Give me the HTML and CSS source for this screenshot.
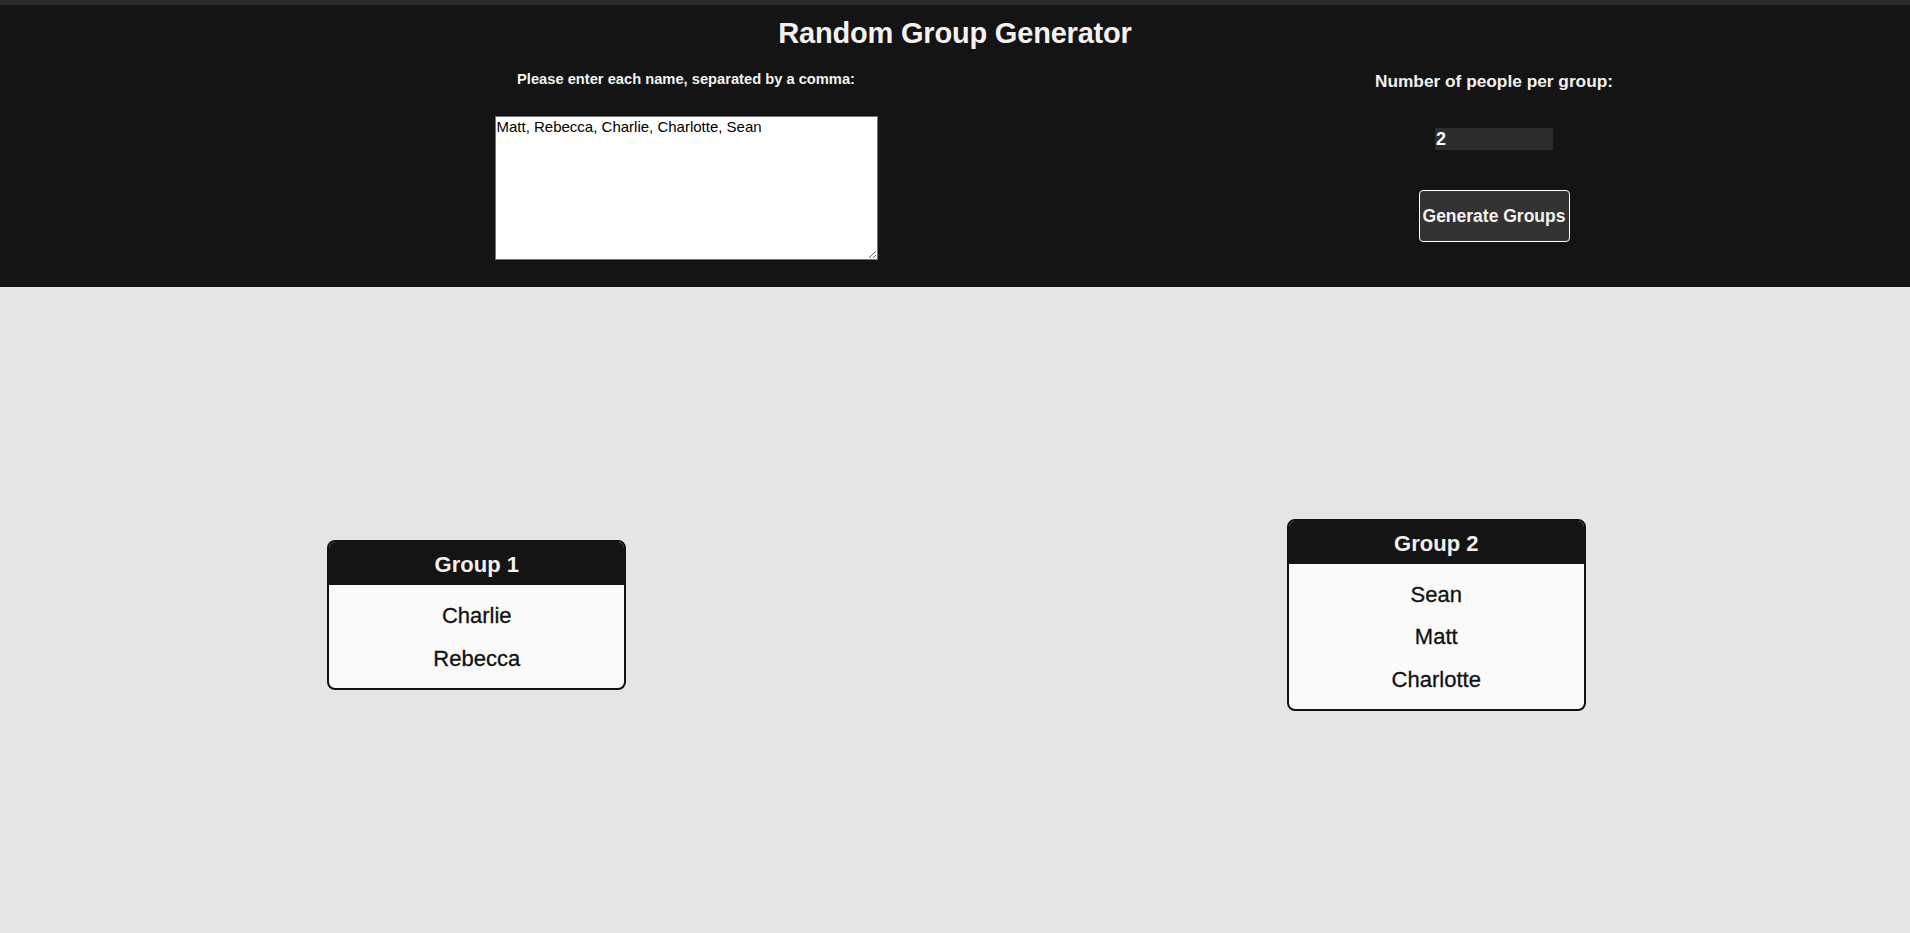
FILE: index.html
```html
<!DOCTYPE html>
<html lang="en">
<head>
<meta charset="utf-8">
<title>Random Group Generator</title>
<link rel="stylesheet" href="styles.css">
</head>
<body>
<header class="top">
  <h1 class="title">Random Group Generator</h1>
  <div class="controls">
    <div class="names-col">
      <p class="label">Please enter each name, separated by a comma:</p>
      <textarea class="names-input">Matt, Rebecca, Charlie, Charlotte, Sean</textarea>
    </div>
    <div class="size-col">
      <p class="label label-lg">Number of people per group:</p>
      <input class="size-input" type="number" value="2">
      <button class="generate-btn" type="button">Generate Groups</button>
    </div>
  </div>
</header>
<main class="groups">
  <section class="group">
    <h2 class="group-title">Group 1</h2>
    <ul class="group-list">
      <li>Charlie</li>
      <li>Rebecca</li>
    </ul>
  </section>
  <section class="group">
    <h2 class="group-title">Group 2</h2>
    <ul class="group-list">
      <li>Sean</li>
      <li>Matt</li>
      <li>Charlotte</li>
    </ul>
  </section>
</main>
</body>
</html>
```

FILE: styles.css
```css
* { box-sizing: border-box; }

html, body {
  margin: 0;
  padding: 0;
  height: 100%;
}

body {
  font-family: "Liberation Sans", Arial, sans-serif;
  background: #e5e5e5;
  overflow: hidden;
}

.top {
  background: #141414;
  border-top: 5px solid #2b2b2b;
  height: 287px;
  color: #f2f2f2;
}

.title {
  margin: 0;
  padding-top: 10px;
  font-size: 29px;
  line-height: 36px;
  font-weight: bold;
  text-align: center;
  color: #f4f2ee;
  letter-spacing: -0.2px;
}

.controls {
  display: flex;
  align-items: flex-start;
  margin-top: 18px;
  padding-left: 486px;
  gap: 458px;
}

.names-col {
  width: 400px;
  text-align: center;
}

.size-col {
  width: 300px;
  text-align: center;
}

.label {
  margin: 0;
  font-size: 14.7px;
  line-height: 20px;
  font-weight: bold;
  color: #f2f2f2;
}

.label-lg {
  font-size: 17.3px;
  line-height: 24px;
}

.names-input {
  display: block;
  margin: 27px auto 0;
  width: 383px;
  height: 144px;
  padding: 1px;
  border: 1px solid #767676;
  background: #fff;
  color: #000;
  font-family: "Liberation Sans", Arial, sans-serif;
  font-size: 15px;
  line-height: normal;
}

.size-input {
  display: block;
  margin: 35px auto 0;
  width: 118px;
  height: 22px;
  padding: 0 1px;
  border: none;
  outline: none;
  background: #2d2d2d;
  color: #fff;
  font-family: "Liberation Sans", Arial, sans-serif;
  font-size: 18px;
  font-weight: bold;
  -moz-appearance: textfield;
}

.size-input::-webkit-inner-spin-button,
.size-input::-webkit-outer-spin-button {
  -webkit-appearance: none;
  margin: 0;
}

.generate-btn {
  display: block;
  margin: 40px auto 0;
  width: 151px;
  height: 52px;
  padding: 0;
  border: 1px solid #fff;
  border-radius: 4px;
  background: #333;
  color: #f4f2ee;
  font-family: "Liberation Sans", Arial, sans-serif;
  font-size: 17.5px;
  font-weight: bold;
}

.groups {
  height: calc(100% - 287px);
  display: grid;
  grid-template-columns: 1fr 1fr;
  column-gap: 12px;
  justify-items: center;
  align-items: center;
  padding-top: 10px;
  padding-left: 3px;
}

.group {
  width: 299px;
  border: 2px solid #111;
  border-radius: 8px;
  overflow: hidden;
  background: #fafafa;
}

.group-title {
  margin: 0;
  height: 43px;
  padding-top: 1px;
  background: #141414;
  color: #f4f2ee;
  font-size: 22px;
  line-height: 43px;
  font-weight: bold;
  text-align: center;
}

.group-list {
  list-style: none;
  margin: 0;
  padding: 10px 0 8px;
  text-align: center;
}

.group-list li {
  font-size: 22px;
  line-height: 42.5px;
  color: #111;
  -webkit-text-stroke: 0.3px #111;
}
```
